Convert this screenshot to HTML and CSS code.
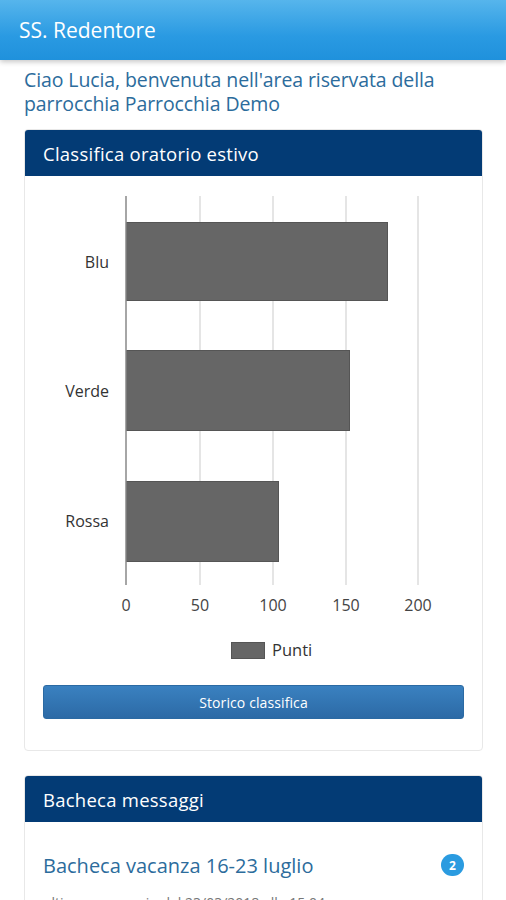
FILE: index.html
```html
<!DOCTYPE html>
<html lang="it">
<head>
<meta charset="utf-8">
<title>SS. Redentore</title>
<link rel="stylesheet" href="styles.css">
</head>
<body>
<header class="topbar">
  <h1 class="topbar-title">SS. Redentore</h1>
</header>
<main class="content">
  <p class="welcome">Ciao Lucia, benvenuta nell'area riservata della parrocchia Parrocchia Demo</p>

  <section class="card">
    <h2 class="card-head">Classifica oratorio estivo</h2>
    <div class="card-body">
      <svg class="chart" width="421" height="500" viewBox="0 0 421 500" xmlns="http://www.w3.org/2000/svg">
        <g stroke="#dddddd" stroke-width="1.5">
          <line x1="157" y1="20" x2="157" y2="409"/>
          <line x1="230" y1="20" x2="230" y2="409"/>
          <line x1="303" y1="20" x2="303" y2="409"/>
          <line x1="375" y1="20" x2="375" y2="409"/>
        </g>
        <g fill="#666666" stroke="#555555" stroke-width="1">
          <rect x="83.5" y="46.5" width="261" height="78"/>
          <rect x="83.5" y="174.5" width="223" height="80"/>
          <rect x="83.5" y="305.5" width="152" height="80"/>
        </g>
        <line x1="83" y1="20" x2="83" y2="409" stroke="#888888" stroke-width="1.5"/>
        <g class="cat-label" text-anchor="end">
          <text x="66" y="92">Blu</text>
          <text x="66" y="221">Verde</text>
          <text x="66" y="351">Rossa</text>
        </g>
        <g class="tick-label" text-anchor="middle">
          <text x="83" y="435">0</text>
          <text x="157" y="435">50</text>
          <text x="230" y="435">100</text>
          <text x="303" y="435">150</text>
          <text x="375" y="435">200</text>
        </g>
        <rect x="188.5" y="466.5" width="33" height="16" fill="#666666" stroke="#555555"/>
        <text class="legend-label" x="229" y="480">Punti</text>
      </svg>
      <button class="btn" type="button">Storico classifica</button>
    </div>
  </section>

  <section class="card">
    <h2 class="card-head">Bacheca messaggi</h2>
    <div class="card-body board">
      <div class="board-row">
        <span class="board-title">Bacheca vacanza 16-23 luglio</span>
        <span class="badge">2</span>
      </div>
      <p class="board-meta">ultimo messaggio del 23/03/2018 alle 15:04</p>
    </div>
  </section>
</main>
</body>
</html>
```

FILE: styles.css
```css
html, body {
  margin: 0;
  padding: 0;
  background: #ffffff;
}
body {
  font-family: "Open Sans", "Noto Sans", "Liberation Sans", sans-serif;
  color: #333333;
  width: 506px;
  height: 900px;
  overflow: hidden;
}
.topbar {
  height: 60px;
  background: linear-gradient(to bottom, #56b5ec 0%, #2a9ae2 60%, #1f91dc 100%);
  box-shadow: 0 2px 5px rgba(0, 0, 0, 0.22);
  display: flex;
  align-items: center;
  padding: 0 19px;
  position: relative;
  z-index: 1;
}
.topbar-title {
  margin: 0;
  font-size: 21px;
  font-weight: 400;
  color: #ffffff;
  letter-spacing: 0;
}
.content {
  padding: 8px 23px 0 24px;
}
.welcome {
  margin: 0 0 13px 0;
  font-size: 19.5px;
  line-height: 24px;
  color: #2c6c9c;
  letter-spacing: -0.1px;
}
.card {
  border: 1px solid #e8e8e8;
  border-radius: 4px;
  margin-bottom: 24px;
  background: #ffffff;
}
.card-head {
  margin: 0;
  height: 46px;
  display: flex;
  align-items: center;
  padding: 0 18px;
  background: #033b75;
  color: #ffffff;
  font-size: 18.5px;
  font-weight: 400;
  border-radius: 3px 3px 0 0;
  letter-spacing: 0.25px;
}
.card-body {
  padding: 0 18px 31px 18px;
}
.chart {
  display: block;
}
.cat-label text {
  font-family: "Open Sans", sans-serif;
  font-size: 16px;
  fill: #333333;
}
.tick-label text {
  font-family: "Open Sans", sans-serif;
  font-size: 16px;
  fill: #444444;
}
.legend-label {
  font-family: "Open Sans", sans-serif;
  font-size: 16.5px;
  fill: #333333;
}
.btn {
  display: block;
  width: 100%;
  height: 34px;
  margin-top: 9px;
  border: 1px solid #2b6aa3;
  border-radius: 3px;
  background: linear-gradient(to bottom, #3a81c0 0%, #2c6aa6 100%);
  color: #ffffff;
  font-family: "Open Sans", sans-serif;
  font-size: 14px;
  letter-spacing: 0.1px;
}
.board {
  padding-top: 30px;
}
.board-row {
  display: flex;
  align-items: center;
  justify-content: space-between;
  height: 26px;
}
.board-title {
  font-size: 20px;
  color: #2c6c9c;
  letter-spacing: 0;
}
.badge {
  width: 23px;
  height: 22px;
  border-radius: 11px;
  background: #2a9be0;
  color: #ffffff;
  font-size: 12px;
  font-weight: 700;
  display: flex;
  align-items: center;
  justify-content: center;
}
.board-meta {
  margin: 15px 0 0 0;
  font-size: 14px;
  color: #777777;
}
```
